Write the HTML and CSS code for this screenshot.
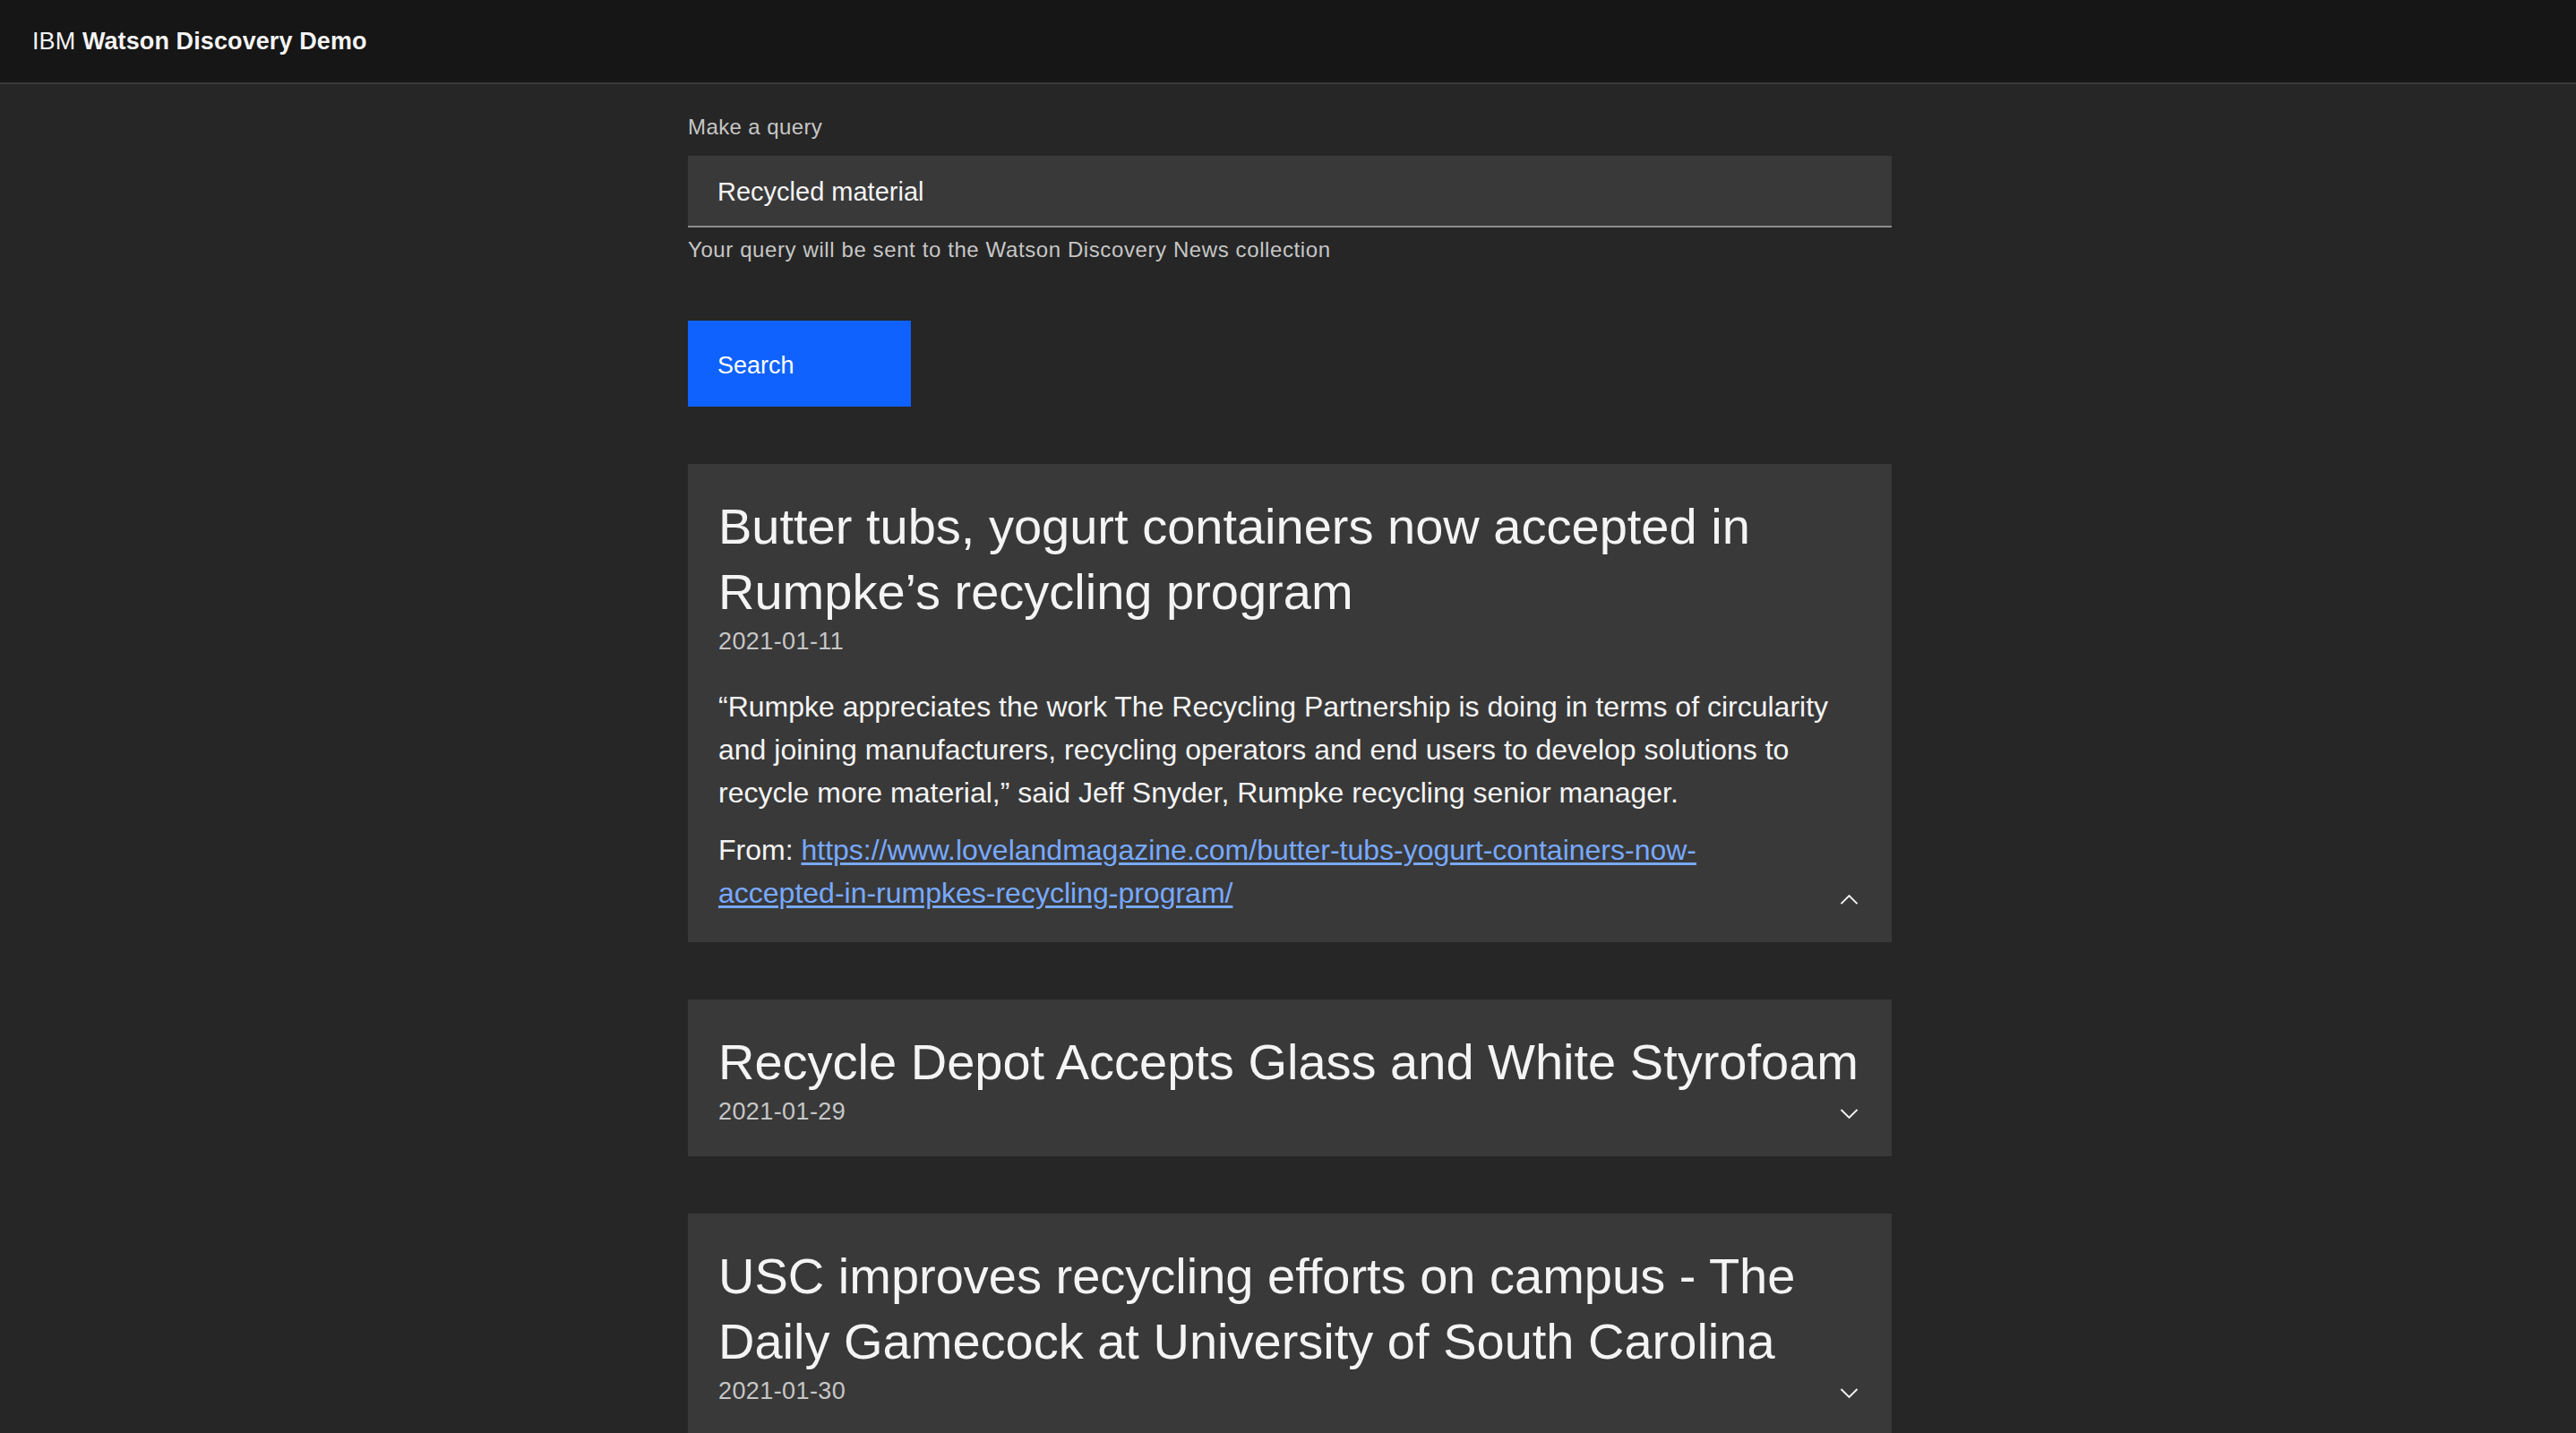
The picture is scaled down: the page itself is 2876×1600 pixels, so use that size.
FILE: index.html
```html
<!DOCTYPE html>
<html lang="en">
<head>
<meta charset="utf-8">
<title>IBM Watson Discovery Demo</title>
<link rel="stylesheet" href="styles.css">
</head>
<body>
<header class="topbar">
  <span class="brand"><span class="brand-prefix">IBM</span> <span class="brand-name">Watson Discovery Demo</span></span>
</header>
<main class="main">
  <form class="query">
    <label class="label" for="q">Make a query</label>
    <input id="q" class="input" type="text" value="Recycled material">
    <div class="helper">Your query will be sent to the Watson Discovery News collection</div>
    <button class="btn" type="button">Search</button>
  </form>
  <section class="results">
    <article class="card">
      <h2 class="title">Butter tubs, yogurt containers now accepted in Rumpke’s recycling program</h2>
      <div class="date">2021-01-11</div>
      <p class="excerpt">“Rumpke appreciates the work The Recycling Partnership is doing in terms of circularity and joining manufacturers, recycling operators and end users to develop solutions to recycle more material,” said Jeff Snyder, Rumpke recycling senior manager.</p>
      <p class="source"><span class="source-label">From:</span> <a class="link" href="#">https://www.lovelandmagazine.com/butter-tubs-yogurt-containers-now-accepted-in-rumpkes-recycling-program/</a></p>
      <button class="toggle" type="button" aria-label="Collapse">
        <svg viewBox="0 0 16 16" width="31" height="31"><path d="M8 5L13 10 12.3 10.7 8 6.4 3.7 10.7 3 10z" fill="#f4f4f4"/></svg>
      </button>
    </article>
    <article class="card card-collapsed">
      <h2 class="title">Recycle Depot Accepts Glass and White Styrofoam</h2>
      <div class="date">2021-01-29</div>
      <button class="toggle" type="button" aria-label="Expand">
        <svg viewBox="0 0 16 16" width="31" height="31"><path d="M8 11L3 6 3.7 5.3 8 9.6 12.3 5.3 13 6z" fill="#f4f4f4"/></svg>
      </button>
    </article>
    <article class="card card-collapsed">
      <h2 class="title">USC improves recycling efforts on campus - The Daily Gamecock at University of South Carolina</h2>
      <div class="date">2021-01-30</div>
      <button class="toggle" type="button" aria-label="Expand">
        <svg viewBox="0 0 16 16" width="31" height="31"><path d="M8 11L3 6 3.7 5.3 8 9.6 12.3 5.3 13 6z" fill="#f4f4f4"/></svg>
      </button>
    </article>
  </section>
</main>
</body>
</html>
```
FILE: styles.css
```css
html, body {
  margin: 0;
  padding: 0;
}
body {
  background: #262626;
  color: #f4f4f4;
  font-family: "Liberation Sans", Arial, sans-serif;
  min-height: 100vh;
}
.topbar {
  height: 92px;
  background: #161616;
  border-bottom: 2px solid #393939;
  display: flex;
  align-items: center;
  padding-left: 36px;
}
.brand {
  font-size: 27px;
  color: #f4f4f4;
  letter-spacing: 0.1px;
}
.brand-prefix {
  font-weight: 400;
}
.brand-name {
  font-weight: 700;
}
.main {
  width: 1344px;
  margin-left: calc(50% - 670px);
  padding-top: 32px;
}
.query {
  display: flex;
  flex-direction: column;
  align-items: flex-start;
}
.label {
  font-size: 24px;
  line-height: 32px;
  letter-spacing: 0.4px;
  color: #c6c6c6;
}
.input {
  box-sizing: border-box;
  width: 100%;
  height: 80px;
  margin-top: 16px;
  padding: 2px 33px 0;
  background: #393939;
  border: none;
  border-bottom: 2px solid #8d8d8d;
  border-radius: 0;
  color: #f4f4f4;
  font-family: "Liberation Sans", Arial, sans-serif;
  font-size: 29px;
  outline: none;
}
.helper {
  margin-top: 9px;
  font-size: 24px;
  line-height: 32px;
  letter-spacing: 0.6px;
  color: #c6c6c6;
}
.btn {
  margin-top: 63px;
  width: 249px;
  height: 96px;
  padding: 4px 0 0 33px;
  background: #0f62fe;
  border: none;
  border-radius: 0;
  color: #ffffff;
  font-family: "Liberation Sans", Arial, sans-serif;
  font-size: 27px;
  text-align: left;
  cursor: pointer;
}
.results {
  margin-top: 64px;
  display: flex;
  flex-direction: column;
  gap: 64px;
}
.card {
  position: relative;
  background: #393939;
  padding: 33px 24px 31px 34px;
}
.card-collapsed {
  padding-bottom: 34px;
}
.title {
  margin: 0;
  font-size: 56px;
  line-height: 73px;
  font-weight: 400;
  color: #f4f4f4;
}
.date {
  margin-top: 3px;
  font-size: 27px;
  line-height: 32px;
  letter-spacing: 0.4px;
  color: #c6c6c6;
}
.excerpt {
  margin: 33px 0 0;
  font-size: 32px;
  line-height: 48px;
  color: #f4f4f4;
}
.source {
  margin: 16px 0 0;
  padding-right: 72px;
  font-size: 32px;
  line-height: 48px;
  color: #f4f4f4;
}
.link {
  color: #78a9ff;
  text-decoration: underline;
  text-underline-offset: 3px;
}
.toggle {
  position: absolute;
  right: 32px;
  bottom: 32px;
  width: 31px;
  height: 31px;
  padding: 0;
  background: transparent;
  border: none;
  display: flex;
  align-items: center;
  justify-content: center;
  cursor: pointer;
}
.toggle svg {
  display: block;
}
```
